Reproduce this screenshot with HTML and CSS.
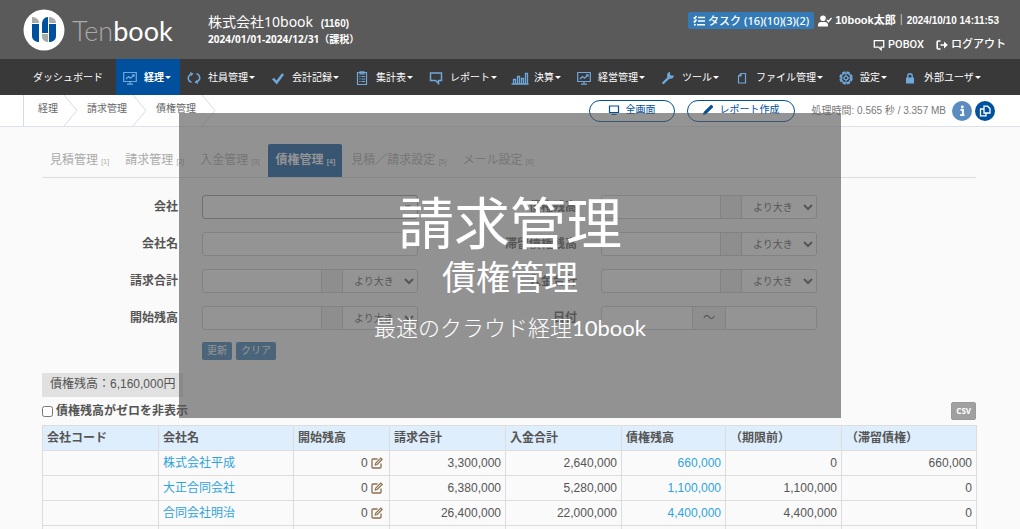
FILE: index.html
```html
<!DOCTYPE html>
<html lang="ja">
<head>
<meta charset="utf-8">
<meta name="viewport" content="width=device-width, initial-scale=1">
<title>債権管理 | Tenbook</title>
<link rel="stylesheet" href="styles.css">
</head>
<body>
<svg class="defs" aria-hidden="true">
  <symbol id="i-chart" viewBox="0 0 14 14"><path d="M.7 1.500h12.600v9H.7zM7 10.500v2.500M4 13.200h6M3 8l2.500-2.500 2 1.700L11 4M9 3.800h2v2" fill="none" stroke="currentColor" stroke-width="1.200"/></symbol>
  <symbol id="i-cycle" viewBox="0 0 14 14"><path d="M4.500 3C1.500 4 .8 7 1.500 8.500 2 10 3 11 4.500 11.300M9.500 11c3-1 3.700-4 3-5.500C12 4 11 3 9.500 2.700" fill="none" stroke="currentColor" stroke-width="1.600"/><path d="M3 1l3.500 1.500L4 5.200zM11 13L7.500 11.500 10 8.800z" fill="currentColor"/></symbol>
  <symbol id="i-check" viewBox="0 0 14 14"><path d="M2 7.500l3.600 4L12 3" fill="none" stroke="currentColor" stroke-width="2.600"/></symbol>
  <symbol id="i-list" viewBox="0 0 14 14"><path d="M2.500 1.500h9v12h-9zM5 .8h4v2H5zM4.300 5.500h1.200M6.500 5.500h3.400M4.300 8h1.200M6.500 8h3.400M4.300 10.500h1.200M6.500 10.500h3.400" fill="none" stroke="currentColor" stroke-width="1.200"/></symbol>
  <symbol id="i-comment" viewBox="0 0 14 14"><path d="M1.500 2h11v7.500H9.500v3L6.500 9.500h-5z" fill="none" stroke="currentColor" stroke-width="1.500"/></symbol>
  <symbol id="i-bars" viewBox="0 0 18 14"><path d="M.5 13h17M2.500 13V8.500h2V13M6.500 13V5.500h2V13M10.500 13V7.500h2V13M14.500 13V2.500h2V13" fill="none" stroke="currentColor" stroke-width="1.300"/></symbol>
  <symbol id="i-wrench" viewBox="0 0 14 14"><path d="M2.300 12L8 6.300" stroke="currentColor" stroke-width="2.400" stroke-linecap="round"/><path d="M12.700 4.200a3.300 3.300 0 1 1-3.300-3.100L8.700 3l1.800 1.800z" fill="currentColor"/></symbol>
  <symbol id="i-file" viewBox="0 0 14 14"><path d="M6 2.500h4.500v9.500h-7V5zM6 2.500V5H3.500" fill="none" stroke="currentColor" stroke-width="1.200"/></symbol>
  <symbol id="i-gear" viewBox="0 0 14 14"><g fill="none" stroke="currentColor"><circle cx="7" cy="7" r="5.900" stroke-width="1.600" stroke-dasharray="3.300 1.330"/><circle cx="7" cy="7" r="4.900" stroke-width="1.400"/><circle cx="7" cy="7" r="1.900" stroke-width="1.200"/><path d="M7 2.500v2.700M7 8.800v2.700M2.500 7h2.700M8.800 7h2.700"/></g></symbol>
  <symbol id="i-lock" viewBox="0 0 14 14"><path d="M3 6.500h8v6H3z" fill="currentColor"/><path d="M4.800 7V5a2.200 2.200 0 0 1 4.400 0v2" fill="none" stroke="currentColor" stroke-width="1.400"/></symbol>
  <symbol id="i-tasks" viewBox="0 0 12 12"><path d="M.7 2.500l1 1L3.500 1M.7 6l1 1 1.800-2.500M5 2.500h7M5 6h7M4 9.700h8" fill="none" stroke="currentColor" stroke-width="1.500"/><circle cx="1.800" cy="9.700" r="1" fill="currentColor"/></symbol>
  <symbol id="i-user" viewBox="0 0 14 12"><circle cx="5" cy="3.300" r="2.800" fill="currentColor"/><path d="M0 11.500V10c0-2 1.500-3 3-3h4c1.500 0 3 1 3 3v1.500z" fill="currentColor"/><path d="M9 5l1.500 1.600L13.500 3" fill="none" stroke="currentColor" stroke-width="1.400"/></symbol>
  <symbol id="i-exit" viewBox="0 0 12 12"><path d="M4.500 2H2.200a1 1 0 0 0-1 1v6a1 1 0 0 0 1 1h2.300M4.500 6h5" fill="none" stroke="currentColor" stroke-width="1.600"/><path d="M8 2.500L11.800 6 8 9.500z" fill="currentColor"/></symbol>
  <symbol id="i-screen" viewBox="0 0 12 12"><path d="M1.500 2h9v6.500h-9zM3.500 10.500h5" fill="none" stroke="currentColor" stroke-width="1.200"/></symbol>
  <symbol id="i-pencil" viewBox="0 0 12 12"><path d="M1 11l.7-3L8.500 1.200a1 1 0 0 1 1.400 0l.9.9a1 1 0 0 1 0 1.400L4 10.300z" fill="currentColor"/></symbol>
  <symbol id="i-copy" viewBox="0 0 12 12"><path d="M5 1.200h3.500L11 3.500V8H5zM5 4H1.500v6.800H7V8" fill="none" stroke="currentColor" stroke-width="1.300"/></symbol>
  <symbol id="i-edit" viewBox="0 0 12 12"><path d="M6.500 2H2a1 1 0 0 0-1 1v7a1 1 0 0 0 1 1h7a1 1 0 0 0 1-1V6.500" fill="none" stroke="currentColor" stroke-width="1.300"/><path d="M4.300 8l.5-2L9.800 1l1.400 1.400-5 5z" fill="none" stroke="currentColor" stroke-width="1.100"/></symbol>
</svg>

<div class="page">
  <header class="header">
    <a class="brand" href="#">
      <svg class="brand-mark" viewBox="0 0 42 42" aria-hidden="true">
        <circle cx="21" cy="21" r="20.500" fill="#fff"/>
        <path d="M9 15h7v18c-4 0-7-2.500-7-6z" fill="#00509d"/>
        <path d="M9 8c4 0 7 2.500 7 6H9z" fill="#aaa"/>
        <path d="M25 8v16h-6V15c0-4 2.500-7 6-7z" fill="#00509d"/>
        <path d="M26 8c4 0 7 2.500 7 6h-7z" fill="#aaa"/>
        <path d="M26 15h7v12c0 3.500-2.500 6-7 6z" fill="#00509d"/>
        <path d="M19 25h6v8c-4 0-6-2.500-6-6z" fill="#aaa"/>
      </svg>
      <span class="brand-name"><span class="brand-ten">Ten</span>book</span>
    </a>
    <div class="company">
      <div class="company-name">株式会社10book <span class="company-id">(1160)</span></div>
      <div class="company-term">2024/01/01-2024/12/31（課税）</div>
    </div>
    <div class="account">
      <div class="account-row">
        <a class="task" href="#"><svg class="ic12"><use href="#i-tasks"/></svg>タスク (16)(10)(3)(2)</a>
        <span class="user"><svg class="ic-user"><use href="#i-user"/></svg><span>10book太郎｜<span class="clock">2024/10/10 14:11:53</span></span></span>
      </div>
      <div class="account-row account-links">
        <a href="#"><svg class="ic12"><use href="#i-comment"/></svg>POBOX</a>
        <a href="#"><svg class="ic12"><use href="#i-exit"/></svg>ログアウト</a>
      </div>
    </div>
  </header>

  <nav class="nav">
    <a class="nav-home" href="#">ダッシュボード</a>
    <a class="nav-item active" href="#"><svg><use href="#i-chart"/></svg><span class="caret">経理</span></a>
    <a class="nav-item" href="#"><svg><use href="#i-cycle"/></svg><span class="caret">社員管理</span></a>
    <a class="nav-item" href="#"><svg><use href="#i-check"/></svg><span class="caret">会計記録</span></a>
    <a class="nav-item" href="#"><svg><use href="#i-list"/></svg><span class="caret">集計表</span></a>
    <a class="nav-item" href="#"><svg><use href="#i-comment"/></svg><span class="caret">レポート</span></a>
    <a class="nav-item" href="#"><svg class="wide"><use href="#i-bars"/></svg><span class="caret">決算</span></a>
    <a class="nav-item" href="#"><svg><use href="#i-chart"/></svg><span class="caret">経営管理</span></a>
    <a class="nav-item" href="#"><svg><use href="#i-wrench"/></svg><span class="caret">ツール</span></a>
    <a class="nav-item" href="#"><svg><use href="#i-file"/></svg><span class="caret">ファイル管理</span></a>
    <a class="nav-item" href="#"><svg><use href="#i-gear"/></svg><span class="caret">設定</span></a>
    <a class="nav-item" href="#"><svg><use href="#i-lock"/></svg><span class="caret">外部ユーザ</span></a>
  </nav>

  <div class="subbar">
    <div class="crumbs">
      <a href="#">経理</a><svg viewBox="0 0 14 31"><path d="M0 0l13 15.500L0 31"/></svg>
      <a href="#">請求管理</a><svg viewBox="0 0 14 31"><path d="M0 0l13 15.500L0 31"/></svg>
      <a href="#">債権管理</a><svg viewBox="0 0 14 31"><path d="M0 0l13 15.500L0 31"/></svg>
    </div>
    <div class="tools">
      <button class="pill" type="button"><svg class="ic12"><use href="#i-screen"/></svg>全画面</button>
      <button class="pill report" type="button"><svg class="ic12"><use href="#i-pencil"/></svg>レポート作成</button>
      <span class="timing">処理時間: 0.565 秒 / 3.357 MB</span>
      <span class="rounds">
        <button class="round info" type="button" aria-label="情報"><svg viewBox="0 0 12 12"><path d="M4.500 5H7v5M4.200 10h4.200" fill="none" stroke="#fff" stroke-width="2"/><circle cx="6.300" cy="2" r="1.400" fill="#fff"/></svg></button>
        <button class="round" type="button" aria-label="コピー"><svg><use href="#i-copy"/></svg></button>
      </span>
    </div>
  </div>

  <main class="main">
    <div class="tabs">
      <a href="#">見積管理 <small>[1]</small></a>
      <a href="#">請求管理 <small>[2]</small></a>
      <a href="#">入金管理 <small>[3]</small></a>
      <a class="active" href="#">債権管理 <small>[4]</small></a>
      <a href="#">見積／請求設定 <small>[5]</small></a>
      <a href="#">メール設定 <small>[6]</small></a>
    </div>

    <form class="search">
      <label for="company">会社</label>
      <div class="group"><button class="combo" id="company" type="button"><i></i></button></div>
      <label for="balance">債権残高</label>
      <div class="group"><input id="balance" type="text"><span class="addon"></span><select aria-label="債権残高の条件"><option>より大き</option></select></div>

      <label for="cname">会社名</label>
      <div class="group"><input id="cname" type="text"></div>
      <label for="overdue">滞留債権残高</label>
      <div class="group"><input id="overdue" type="text"><span class="addon"></span><select aria-label="滞留債権残高の条件"><option>より大き</option></select></div>

      <label for="billed">請求合計</label>
      <div class="group"><input id="billed" type="text"><span class="addon"></span><select aria-label="請求合計の条件"><option>より大き</option></select></div>
      <label for="paid">入金合計</label>
      <div class="group"><input id="paid" type="text"><span class="addon"></span><select aria-label="入金合計の条件"><option>より大き</option></select></div>

      <label for="opening">開始残高</label>
      <div class="group"><input id="opening" type="text"><span class="addon"></span><select aria-label="開始残高の条件"><option>より大き</option></select></div>
      <label for="from">日付</label>
      <div class="group"><input id="from" type="text"><span class="addon range">～</span><input type="text" aria-label="終了日"></div>

      <div class="actions"><button type="button">更新</button><button type="button">クリア</button></div>
    </form>

    <div class="total">債権残高：6,160,000円</div>
    <div class="options">
      <label><input type="checkbox">債権残高がゼロを非表示</label>
      <button class="csv" type="button">CSV</button>
    </div>

    <table class="ledger">
      <colgroup><col class="w-code"><col class="w-wide"><col class="w-open"><col class="w-code"><col class="w-code"><col class="w-bal"><col class="w-code"><col class="w-wide"></colgroup>
      <thead><tr><th>会社コード</th><th>会社名</th><th>開始残高</th><th>請求合計</th><th>入金合計</th><th>債権残高</th><th>（期限前）</th><th>（滞留債権）</th></tr></thead>
      <tbody>
        <tr><td></td><td class="name"><a href="#">株式会社平成</a></td><td>0 <svg class="edit"><use href="#i-edit"/></svg></td><td>3,300,000</td><td>2,640,000</td><td><a href="#">660,000</a></td><td>0</td><td>660,000</td></tr>
        <tr><td></td><td class="name"><a href="#">大正合同会社</a></td><td>0 <svg class="edit"><use href="#i-edit"/></svg></td><td>6,380,000</td><td>5,280,000</td><td><a href="#">1,100,000</a></td><td>1,100,000</td><td>0</td></tr>
        <tr><td></td><td class="name"><a href="#">合同会社明治</a></td><td>0 <svg class="edit"><use href="#i-edit"/></svg></td><td>26,400,000</td><td>22,000,000</td><td><a href="#">4,400,000</a></td><td>4,400,000</td><td>0</td></tr>
        <tr><td></td><td></td><td></td><td></td><td></td><td></td><td></td><td></td></tr>
      </tbody>
    </table>
  </main>

  <div class="overlay">
    <div class="overlay-title">請求管理</div>
    <div class="overlay-sub">債権管理</div>
    <div class="overlay-tag">最速のクラウド経理<span class="overlay-name">10book</span></div>
  </div>
</div>
</body>
</html>
```

FILE: styles.css
```css
* { box-sizing: border-box; }
body {
  margin: 0;
  background: #fafafa;
  color: #555;
  font: 12px/16px "Liberation Sans", "Noto Sans CJK JP", sans-serif;
}
a { color: inherit; text-decoration: none; }
button, input, select { font: inherit; color: inherit; margin: 0; }
.defs { display: none; }
.page { position: relative; height: 100vh; overflow: hidden; }
.ic12 { width: 12px; height: 12px; flex: none; }

/* header */
.header { display: flex; height: 59px; padding: 0 14px 0 23px; background: #5a5a5a; color: #fff; }
.brand { display: flex; align-items: center; gap: 7px; width: 185px; }
.brand-mark { width: 42px; height: 42px; flex: none; }
.brand-name { padding-top: 3px; font: 27px/30px Lato, sans-serif; }
.brand-ten { color: #aaa; font-weight: 300; }
.company { padding-top: 12px; white-space: nowrap; }
.company-name { font: 14px/19px "Noto Sans", "Noto Sans CJK JP", sans-serif; }
.company-id { margin-left: 4px; font: bold 10px/16px "Liberation Sans", sans-serif; }
.company-term { font: bold 10px/14px "Noto Sans", "Noto Sans CJK JP", sans-serif; }
.account { margin-left: auto; padding-top: 12px; font-size: 11px; white-space: nowrap; }
.account-row { display: flex; align-items: center; justify-content: flex-end; gap: 4px; height: 17px; padding-right: 7px; }
.account-links { height: 31px; gap: 12px; padding-right: 0; font-family: Roboto, "Noto Sans CJK JP", sans-serif; font-weight: 500; }
.account-links a, .user { display: flex; align-items: center; gap: 3px; }
.user { font-weight: bold; }
.clock { font-size: 10px; }
.ic-user { width: 14px; height: 12px; }
.task {
  display: flex; align-items: center; gap: 3px; height: 17px; padding: 0 5px;
  background: #337ab7; border-radius: 2px;
  font: 500 11px/16px "Noto Sans", "Noto Sans CJK JP", sans-serif;
}

/* main navigation */
.nav { display: flex; height: 36px; padding-left: 33px; background: #393939; color: #fff; font-size: 10px; white-space: nowrap; }
.nav-home { display: flex; align-items: center; padding: 2px 13px 0 0; }
.nav-item { display: flex; align-items: center; gap: 7px; padding: 2px 9px 0 7px; }
.nav-item svg { width: 14px; height: 14px; color: #6fa8dc; }
.nav-item svg.wide { width: 18px; margin: 0 -2px; }
.nav-item.active { background: #00509d; font-weight: bold; }
.caret::after {
  content: ""; display: inline-block; margin-left: 1px; vertical-align: 2px;
  border: 3px solid transparent; border-top-color: currentColor; border-bottom: 0;
}

/* breadcrumb and tools */
.subbar { display: flex; justify-content: space-between; height: 32px; padding: 0 25px 0 23px; background: #fff; border-bottom: 1px solid #dde2ea; font-size: 10px; white-space: nowrap; }
.crumbs { display: flex; border-left: 1px solid #d5dbe5; padding-left: 14px; line-height: 28px; color: #666; }
.crumbs svg { width: 14px; height: 31px; margin: 0 9px 0 6px; fill: none; stroke: #d5dbe5; }
.tools { display: flex; align-items: center; gap: 12px; }
.pill {
  display: flex; align-items: center; gap: 6px; height: 22px; padding: 0 18px 2px;
  background: #fff; color: #00509d; border: 1px solid #00509d; border-radius: 11px; line-height: 16px;
}
.pill.report { padding: 0 14px 2px; }
.timing { margin-left: 5px; color: #777; }
.rounds { display: flex; gap: 3px; margin-left: -6px; }
.round { display: grid; place-items: center; width: 20px; height: 20px; padding: 0; border: 0; border-radius: 50%; background: #00509d; color: #fff; }
.round svg { width: 12px; height: 12px; }
.round.info { background: #5b8cc0; }

/* content */
.main { padding: 17px 44px 0 42px; }
.tabs { display: flex; gap: 2px; padding-left: 1px; border-bottom: 1px solid #ddd; color: #aaa; white-space: nowrap; }
.tabs a { height: 33px; padding: 8px 7px 0; border-radius: 2px 2px 0 0; }
.tabs small { font-size: 7px; }
.tabs .active { background: #00509d; color: #fff; font-weight: bold; }

.search {
  display: grid;
  grid-template-columns: minmax(0, 136fr) minmax(0, 216fr) minmax(0, 135fr) minmax(0, 216fr) minmax(0, 135fr);
  gap: 13px 24px; align-items: center; margin-top: 17px;
}
.search label { text-align: right; font-weight: bold; white-space: nowrap; }
.search label:nth-of-type(odd) { grid-column: 1; }
.group { display: flex; height: 24px; }
.group > * { min-width: 0; border: 1px solid #ccc; background: #fff; }
.group > :first-child { border-radius: 3px 0 0 3px; }
.group > :last-child { border-radius: 0 3px 3px 0; }
.group > :only-child { border-radius: 3px; }
.group > * + * { margin-left: -1px; }
.group input { flex: 1 1 0; padding: 0 6px; }
.group .addon { flex: none; width: 22px; background: #eee; text-align: center; line-height: 22px; }
.group .addon.range { width: 34px; }
.group select { flex: none; width: 76px; padding: 0 0 0 7px; font-size: 10px; }
.combo { flex: 1; display: flex; align-items: center; justify-content: flex-end; padding: 0 6px; }
.group .combo { border-color: #999; }
.combo i { border: 3px solid transparent; border-top: 5px solid #888; border-bottom: 0; }
.actions { grid-column: 2; display: flex; gap: 4px; margin-top: -1px; }
.actions button { height: 18px; padding: 0 5px; border: 0; border-radius: 2px; background: #337ab7; color: #fff; font-size: 10px; line-height: 16px; }

.total { width: fit-content; height: 24px; margin-top: 13px; padding: 0 8px; background: #e1e1e1; line-height: 22px; }
.options { display: flex; align-items: center; justify-content: space-between; height: 28px; }
.options label { display: flex; align-items: center; gap: 3px; font-weight: bold; }
.options input { width: 11px; height: 11px; }
.csv { height: 18px; padding: 0 4px; border: 1px solid #999; border-radius: 2px; background: #a0a0a0; color: #fff; font: bold 8px/14px "Noto Sans", sans-serif; }

.ledger { width: 100%; table-layout: fixed; border-collapse: collapse; white-space: nowrap; }
.w-code { width: 116px; }
.w-wide { width: 135px; }
.w-open { width: 96px; }
.w-bal { width: 104px; }
.ledger th, .ledger td { height: 25px; padding: 0 4px; border: 1px solid #ddd; text-align: right; line-height: 16px; }
.ledger th { background: #dfeefc; text-align: left; }
.ledger .name { text-align: left; }
.ledger a { color: #2ea3e0; }
.edit { width: 12px; height: 12px; margin-right: 2px; vertical-align: -2px; color: #8a6d4b; }

/* title card laid over the screen */
.overlay {
  position: absolute; top: 113px; left: 179px; right: 179px;
  padding: 82px 0 75px; background: rgba(88, 88, 88, .64); color: #fff; text-align: center;
  font-family: Lato, "Noto Sans CJK JP", sans-serif; white-space: nowrap;
}
.overlay-title { font-size: 56px; line-height: 56px; }
.overlay-sub { margin-top: 8px; font-size: 34px; line-height: 36px; }
.overlay-tag { margin-top: 18px; font-size: 22px; line-height: 30px; font-weight: 300; }
.overlay-name { font-weight: 400; }
```
